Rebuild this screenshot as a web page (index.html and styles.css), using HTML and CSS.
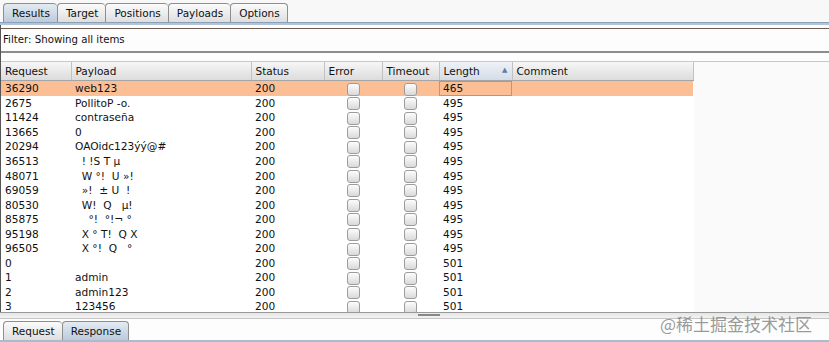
FILE: index.html
```html
<!DOCTYPE html>
<html>
<head>
    <title>Intruder Results</title>
    <link rel="stylesheet" href="styles.css">
</head>
<body>
    <div class="tabbar">
        <div class="tab active">Results</div>
        <div class="tab">Target</div>
        <div class="tab">Positions</div>
        <div class="tab">Payloads</div>
        <div class="tab">Options</div>
    </div>
    <div class="tabline"></div>

    <div class="content">
        <div class="filter">Filter: Showing all items</div>
        <div class="spacer"></div>

        <div class="pane">
            <table class="results">
                <colgroup>
                    <col style="width:70px"><col style="width:180px"><col style="width:73px">
                    <col style="width:58px"><col style="width:57px"><col style="width:73px"><col style="width:181px">
                </colgroup>
                <thead>
                    <tr>
                        <th>Request</th>
                        <th>Payload</th>
                        <th>Status</th>
                        <th>Error</th>
                        <th>Timeout</th>
                        <th class="sorted">Length<span class="arrow">&#9650;</span></th>
                        <th>Comment</th>
                    </tr>
                </thead>
                <tbody>
                    <tr class="selected"><td>36290</td><td>web123</td><td>200</td><td class="chk"><span class="box"></span></td><td class="chk"><span class="box"></span></td><td class="focus">465</td><td></td></tr>
                    <tr><td>2675</td><td>PollitoP -o.</td><td>200</td><td class="chk"><span class="box"></span></td><td class="chk"><span class="box"></span></td><td>495</td><td></td></tr>
                    <tr><td>11424</td><td>contraseña</td><td>200</td><td class="chk"><span class="box"></span></td><td class="chk"><span class="box"></span></td><td>495</td><td></td></tr>
                    <tr><td>13665</td><td>0</td><td>200</td><td class="chk"><span class="box"></span></td><td class="chk"><span class="box"></span></td><td>495</td><td></td></tr>
                    <tr><td>20294</td><td>OAOidc123ýý@#</td><td>200</td><td class="chk"><span class="box"></span></td><td class="chk"><span class="box"></span></td><td>495</td><td></td></tr>
                    <tr><td>36513</td><td>  ! !S T µ</td><td>200</td><td class="chk"><span class="box"></span></td><td class="chk"><span class="box"></span></td><td>495</td><td></td></tr>
                    <tr><td>48071</td><td>  W °!  U »!</td><td>200</td><td class="chk"><span class="box"></span></td><td class="chk"><span class="box"></span></td><td>495</td><td></td></tr>
                    <tr><td>69059</td><td>  »!  ± U  !</td><td>200</td><td class="chk"><span class="box"></span></td><td class="chk"><span class="box"></span></td><td>495</td><td></td></tr>
                    <tr><td>80530</td><td>  W!  Q   µ!</td><td>200</td><td class="chk"><span class="box"></span></td><td class="chk"><span class="box"></span></td><td>495</td><td></td></tr>
                    <tr><td>85875</td><td>    °!  °!¬ °</td><td>200</td><td class="chk"><span class="box"></span></td><td class="chk"><span class="box"></span></td><td>495</td><td></td></tr>
                    <tr><td>95198</td><td>  X ° T!  Q X</td><td>200</td><td class="chk"><span class="box"></span></td><td class="chk"><span class="box"></span></td><td>495</td><td></td></tr>
                    <tr><td>96505</td><td>  X °!  Q   °</td><td>200</td><td class="chk"><span class="box"></span></td><td class="chk"><span class="box"></span></td><td>495</td><td></td></tr>
                    <tr><td>0</td><td></td><td>200</td><td class="chk"><span class="box"></span></td><td class="chk"><span class="box"></span></td><td>501</td><td></td></tr>
                    <tr><td>1</td><td>admin</td><td>200</td><td class="chk"><span class="box"></span></td><td class="chk"><span class="box"></span></td><td>501</td><td></td></tr>
                    <tr><td>2</td><td>admin123</td><td>200</td><td class="chk"><span class="box"></span></td><td class="chk"><span class="box"></span></td><td>501</td><td></td></tr>
                    <tr><td>3</td><td>123456</td><td>200</td><td class="chk"><span class="box"></span></td><td class="chk"><span class="box"></span></td><td>501</td><td></td></tr>
                </tbody>
            </table>
        </div>
    </div>

    <div class="splitter"><span class="grip"></span></div>

    <div class="tabbar bottom">
        <div class="tab">Request</div>
        <div class="tab active">Response</div>
    </div>
    <div class="bottomline"></div>

    <div class="watermark">@稀土掘金技术社区</div>
</body>
</html>
```

FILE: styles.css
```css
/* Burp Intruder results window */
html, body {
    margin: 0;
    height: 342px;
    overflow: hidden;
}

body {
    font-family: "DejaVu Sans", "Noto Sans CJK SC", sans-serif;
    font-size: 10px;
    color: #111;
    background-color: #fafafa;
    display: flex;
    flex-direction: column;
    position: relative;
}

.tabbar {
    height: 22px;
    padding-left: 3px;
    display: flex;
    align-items: flex-end;
    background-color: #f8f8f8;
    flex-shrink: 0;
}

.tab {
    height: 18px;
    line-height: 18px;
    padding: 0 7px 0 8px;
    border: 1px solid #8e8e8e;
    border-bottom: none;
    border-right: none;
    border-radius: 4px 4px 0 0;
    background: linear-gradient(#fbfbfb, #dedede);
    font-size: 10.5px;
}

.tab:last-child {
    border-right: 1px solid #8e8e8e;
}

.tab.active {
    background: linear-gradient(#e4ebf2, #bccadb);
}

.tabline {
    height: 2px;
    border-top: 1px solid #8aa0b8;
    background-color: #b5c4d4;
    flex-shrink: 0;
}

.content {
    flex: 1;
    display: flex;
    flex-direction: column;
    border-left: 1px solid #555;
    background-color: #fdfdfd;
    min-height: 0;
}

.filter {
    margin-top: 3px;
    border-top: 1px solid #6e5c52;
    height: 22px;
    line-height: 22px;
    padding-left: 2px;
    border-bottom: 2px solid #8c8c8c;
    font-size: 10.2px;
}

.spacer {
    height: 8px;
}

.pane {
    flex: 1;
    border-top: 1px solid #c8c8c8;
    background-color: #fafafa;
    overflow: hidden;
    min-height: 0;
}

.results {
    width: 692px;
    table-layout: fixed;
    border-collapse: collapse;
    background-color: #fff;
}

.results th {
    height: 18px;
    padding: 0 0 0 4px;
    text-align: left;
    font-weight: normal;
    font-size: 10.5px;
    background: linear-gradient(#f6f6f6, #dcdcdc);
    border-right: 1px solid #c2c2c2;
    border-bottom: 1px solid #a4a4a4;
    white-space: nowrap;
}

.results th.sorted {
    background: linear-gradient(#eef2f7, #d3dce7);
    position: relative;
}

.arrow {
    position: absolute;
    right: 4px;
    top: 4px;
    font-size: 7px;
    color: #5a7fa8;
}

.results td {
    height: 14.55px;
    padding: 0 0 0 4px;
    white-space: pre;
    overflow: hidden;
    line-height: 14px;
    font-size: 10.6px;
}

.results tr.selected td {
    background-color: #fcbf95;
}

.results td.focus {
    box-shadow: inset 0 0 0 1px #8da2ba;
}

.results td.chk {
    text-align: center;
    padding: 0;
}

.box {
    display: inline-block;
    width: 11px;
    height: 11px;
    border: 1px solid #9c9c9c;
    border-radius: 3px;
    background: linear-gradient(#fdfdfd, #d9d9d9);
    vertical-align: middle;
}

.splitter {
    height: 5px;
    border-top: 1px solid #9a9a9a;
    border-bottom: 1px solid #c4c4c4;
    background: linear-gradient(#e6e6e6, #f2f2f2);
    flex-shrink: 0;
    display: flex;
    justify-content: center;
}

.grip {
    width: 22px;
    height: 2px;
    margin: 1px 0 0 28px;
    background-color: #888;
}

.tabbar.bottom {
    background-color: #fdfdfd;
    height: 21px;
}

.bottomline {
    height: 2px;
    background-color: #a9bccf;
    flex-shrink: 0;
}

.watermark {
    position: absolute;
    left: 660px;
    top: 311px;
    font-size: 17px;
    color: rgba(120, 120, 120, 0.75);
    font-family: "Noto Sans CJK SC", sans-serif;
}
```
